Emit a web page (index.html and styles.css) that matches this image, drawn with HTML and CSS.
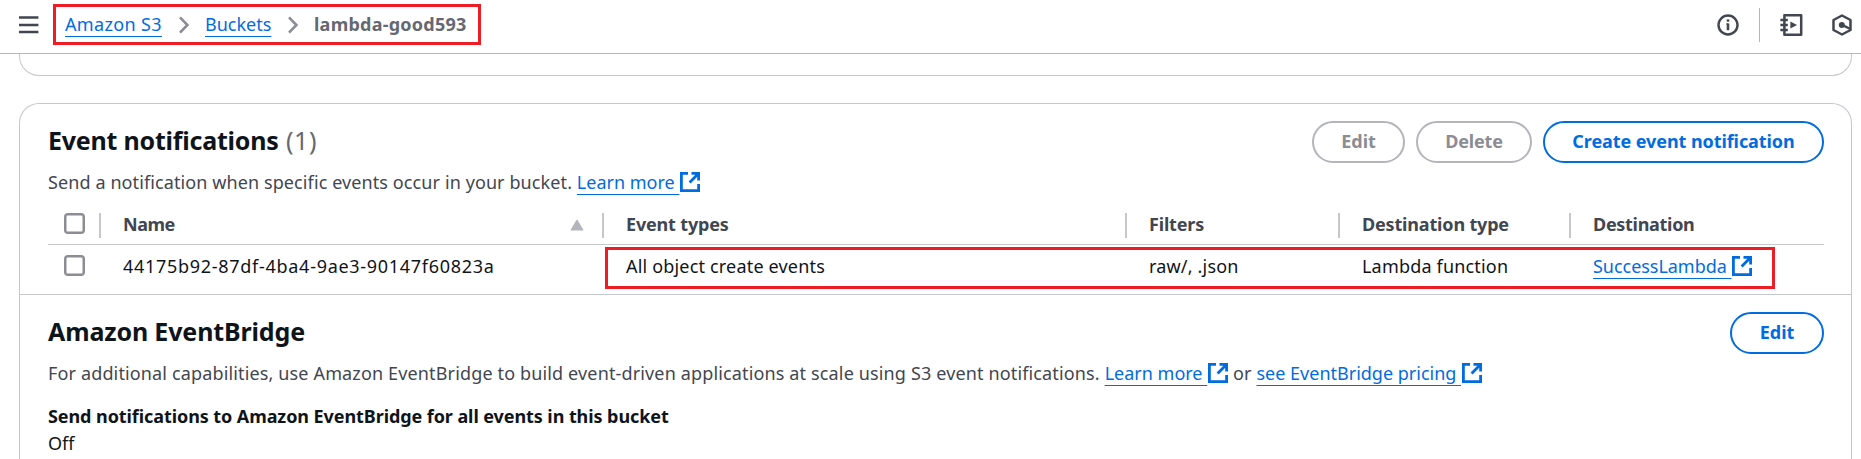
FILE: index.html
```html
<!DOCTYPE html>
<html lang="en">
<head>
<meta charset="utf-8">
<title>lambda-good593</title>
<link rel="stylesheet" href="styles.css">
</head>
<body>
<svg class="defs" aria-hidden="true">
  <symbol id="external" viewBox="0 0 20 20">
    <path d="M8 1.4H1.4V18.6H18.6V12M11.5 1.4H18.6V8.5M18 2L9.6 10.4" fill="none" stroke="currentColor" stroke-width="2.8"/>
  </symbol>
  <symbol id="chevron" viewBox="0 0 12 18">
    <path d="M2 1.4L9.4 9L2 16.6" fill="none" stroke="currentColor" stroke-width="2.6"/>
  </symbol>
</svg>

<header class="topbar">
  <svg class="menu-icon" viewBox="0 0 20 18"><path d="M0 1.6H19.4M0 8.9H19.4M0 15.9H19.4" stroke="currentColor" stroke-width="2.5"/></svg>
  <nav class="breadcrumbs">
    <a class="link crumb-service">Amazon S3</a>
    <svg class="chevron"><use href="#chevron"/></svg>
    <a class="link crumb-buckets">Buckets</a>
    <svg class="chevron"><use href="#chevron"/></svg>
    <span class="crumb-current">lambda-good593</span>
  </nav>
  <div class="tools">
    <svg class="tool info" viewBox="0 0 22 22"><circle cx="11" cy="11" r="9.5" fill="none" stroke="currentColor" stroke-width="2.4"/><path d="M11 9.4V16.2" stroke="currentColor" stroke-width="2.6"/><path d="M9.2 10H11" stroke="currentColor" stroke-width="1.2"/><path d="M11 5.4V7.7" stroke="currentColor" stroke-width="2.6"/></svg>
    <span class="tool-divider"></span>
    <svg class="tool notebook" viewBox="0 0 23 22"><path d="M4.4 1.3H21.2V20.7H4.4Z" fill="none" stroke="currentColor" stroke-width="2.5" stroke-linejoin="round"/><path d="M0.4 6H7.8M0.4 11H7.8M0.4 16H7.8" stroke="currentColor" stroke-width="2.3"/><path d="M10.4 7.4L17 11L10.4 14.6Z" fill="currentColor"/></svg>
    <svg class="tool hexagon" viewBox="0 0 20 22"><path d="M10 1.5L18.5 6V16L10 20.5L1.5 16V6Z" fill="none" stroke="currentColor" stroke-width="2.5" stroke-linejoin="round"/><circle cx="9.8" cy="10.9" r="3" fill="currentColor"/><path d="M10 10.9L18.4 15" stroke="currentColor" stroke-width="2.4"/></svg>
  </div>
</header>

<main class="content">
  <section class="card-end"></section>

  <section class="card">
    <div class="panel events">
      <div class="panel-head">
        <h2 class="title title-events">Event notifications <span class="counter">(1)</span></h2>
        <div class="actions">
          <button class="btn btn-edit" disabled>Edit</button>
          <button class="btn btn-delete" disabled>Delete</button>
          <button class="btn btn-create">Create event notification</button>
        </div>
      </div>
      <p class="description">Send a notification when specific events occur in your bucket. <a class="link">Learn more&nbsp;<svg class="external"><use href="#external"/></svg></a></p>

      <div class="table">
        <div class="row row-head">
          <div class="cell cell-check"><span class="checkbox"></span></div>
          <div class="cell cell-name"><span class="head-name">Name</span><svg class="sort" viewBox="0 0 14 12"><path d="M7 1L13 11H1Z" fill="currentColor" stroke="currentColor" stroke-width="1" stroke-linejoin="round"/></svg></div>
          <div class="cell">Event types</div>
          <div class="cell">Filters</div>
          <div class="cell">Destination type</div>
          <div class="cell head-dest">Destination</div>
        </div>
        <div class="row row-body">
          <div class="cell cell-check"><span class="checkbox"></span></div>
          <div class="cell uuid">44175b92-87df-4ba4-9ae3-90147f60823a</div>
          <div class="cell">All object create events</div>
          <div class="cell">raw/, .json</div>
          <div class="cell">Lambda function</div>
          <div class="cell"><a class="link success">SuccessLambda&nbsp;<svg class="external"><use href="#external"/></svg></a></div>
          <span class="highlight"></span>
        </div>
      </div>
    </div>

    <div class="panel bridge">
      <div class="panel-head">
        <h2 class="title title-bridge">Amazon EventBridge</h2>
        <button class="btn btn-bridge">Edit</button>
      </div>
      <p class="description">For additional capabilities, use Amazon EventBridge to build event-driven applications at scale using S3 event notifications. <a class="link">Learn more&nbsp;<svg class="external"><use href="#external"/></svg></a> or <a class="link">see EventBridge pricing&nbsp;<svg class="external"><use href="#external"/></svg></a></p>
      <dl class="setting">
        <dt>Send notifications to Amazon EventBridge for all events in this bucket</dt>
        <dd>Off</dd>
      </dl>
    </div>
  </section>
</main>
</body>
</html>
```
FILE: styles.css
```css
* { box-sizing: border-box; }

body {
  margin: 0;
  background: #fff;
  color: #0f141a;
  font: 18px/24px "Noto Sans", "Open Sans", sans-serif;
}

.defs { position: absolute; width: 0; height: 0; }

.link {
  color: #006ce0;
  text-decoration: underline 1px;
  text-underline-offset: 5px;
  text-decoration-skip-ink: none;
}

/* Top bar */
.topbar {
  display: flex;
  align-items: flex-start;
  height: 54px;
  border-bottom: 1px solid #b4b4bb;
  color: #424650;
}
.menu-icon { width: 20px; height: 18px; margin: 16px 14px 0 19px; }

.breadcrumbs {
  display: flex;
  align-items: flex-start;
  width: 428px;
  height: 41px;
  margin-top: 4px;
  padding: 5px 0 0 9px;
  border: 3px solid #ee1c25;
  white-space: nowrap;
}
.crumb-service { width: 97px; letter-spacing: 0.36px; }
.crumb-buckets { width: 66px; }
.crumb-current { color: #656871; font-weight: 700; letter-spacing: 0.24px; }
.chevron { width: 12px; height: 18px; margin: 4px 15px 0 16px; color: #8c8c94; }

.tools { display: flex; margin-left: auto; padding-right: 9px; }
.tool { height: 22px; margin-top: 14px; }
.info { width: 22px; }
.tool-divider { width: 1px; height: 34px; margin: 8px 20px 0; background: #b4b4bb; }
.notebook { width: 23px; }
.hexagon { width: 20px; margin-left: 29px; }

/* Cards */
.content { padding: 0 9px 0 19px; }
.card-end {
  height: 22px;
  border: 1px solid #c6c6cd;
  border-top: 0;
  border-radius: 0 0 20px 20px;
}
.card {
  height: 356px;
  margin-top: 27px;
  border: 1px solid #c6c6cd;
  border-bottom: 0;
  border-radius: 20px 20px 0 0;
}
.panel { padding: 17px 27px 0 28px; }
.events { height: 191px; border-bottom: 1px solid #c6c6cd; }

.panel-head { display: flex; justify-content: space-between; align-items: flex-start; height: 42px; }
.title { margin: 4px 0 0; font-size: 25px; line-height: 30px; font-weight: 700; }
.title-events { letter-spacing: -0.22px; }
.title-bridge { letter-spacing: -0.14px; }
.counter { margin-left: 1px; color: #656871; font-weight: 400; letter-spacing: 0.6px; }

.actions { display: flex; gap: 11px; }
.btn {
  height: 42px;
  padding: 0 0 2px;
  border: 2px solid #006ce0;
  border-radius: 21px;
  background: #fff;
  color: #006ce0;
  font: 700 18px/24px "Noto Sans", "Open Sans", sans-serif;
  white-space: nowrap;
}
.btn:disabled { border-color: #b4b4bb; color: #8c8c94; }
.btn-edit { width: 93px; }
.btn-delete { width: 116px; letter-spacing: -0.15px; }
.btn-create { width: 281px; letter-spacing: -0.08px; }
.btn-bridge { width: 94px; }

.description { margin: 7px 0 0; color: #424650; white-space: nowrap; letter-spacing: 0.1px; }
.bridge .description { letter-spacing: 0.145px; }
.description .link { letter-spacing: 0; }
.external { width: 20px; height: 20px; margin-left: 1px; vertical-align: -3px; }

/* Table */
.table { margin-top: 19px; }
.row { display: grid; grid-template-columns: 53px 503px 523px 213px 231px 1fr; }
.cell { padding-left: 22px; white-space: nowrap; }
.row-head { height: 32px; border-bottom: 1px solid #c6c6cd; }
.row-head .cell {
  height: 25px;
  border-right: 2px solid #c6c6cd;
  color: #424650;
  font-weight: 700;
  line-height: 22px;
  letter-spacing: -0.17px;
}
.row-head .cell:last-child { border-right: 0; }
.row .cell-check { padding-left: 16px; }
.row-head .cell-name { display: flex; justify-content: space-between; padding-right: 18px; }
.row-head .head-name { letter-spacing: -0.5px; }
.row-head .head-dest { letter-spacing: -0.3px; }
.sort { width: 14px; height: 12px; margin-top: 6px; color: #b4b4bb; }
.checkbox {
  display: block;
  width: 21px;
  height: 21px;
  border: 2px solid #8c8c94;
  border-radius: 4px;
  box-shadow: inset 0 0 0 0.5px #8c8c94;
}

.row-body { position: relative; height: 49px; padding-top: 9px; letter-spacing: 0.18px; }
.row-body .checkbox { margin-top: 1px; }
.uuid { letter-spacing: 0.71px; }
.success { letter-spacing: -0.04px; }

/* Callout drawn over the row */
.highlight {
  position: absolute;
  top: 2px;
  left: 557px;
  width: 1170px;
  height: 42px;
  border: 3px solid #ee1c25;
}

.setting { margin: 19px 0 0; }
.setting dt { font-weight: 700; letter-spacing: -0.08px; }
.setting dd { margin: 3px 0 0; }
```
